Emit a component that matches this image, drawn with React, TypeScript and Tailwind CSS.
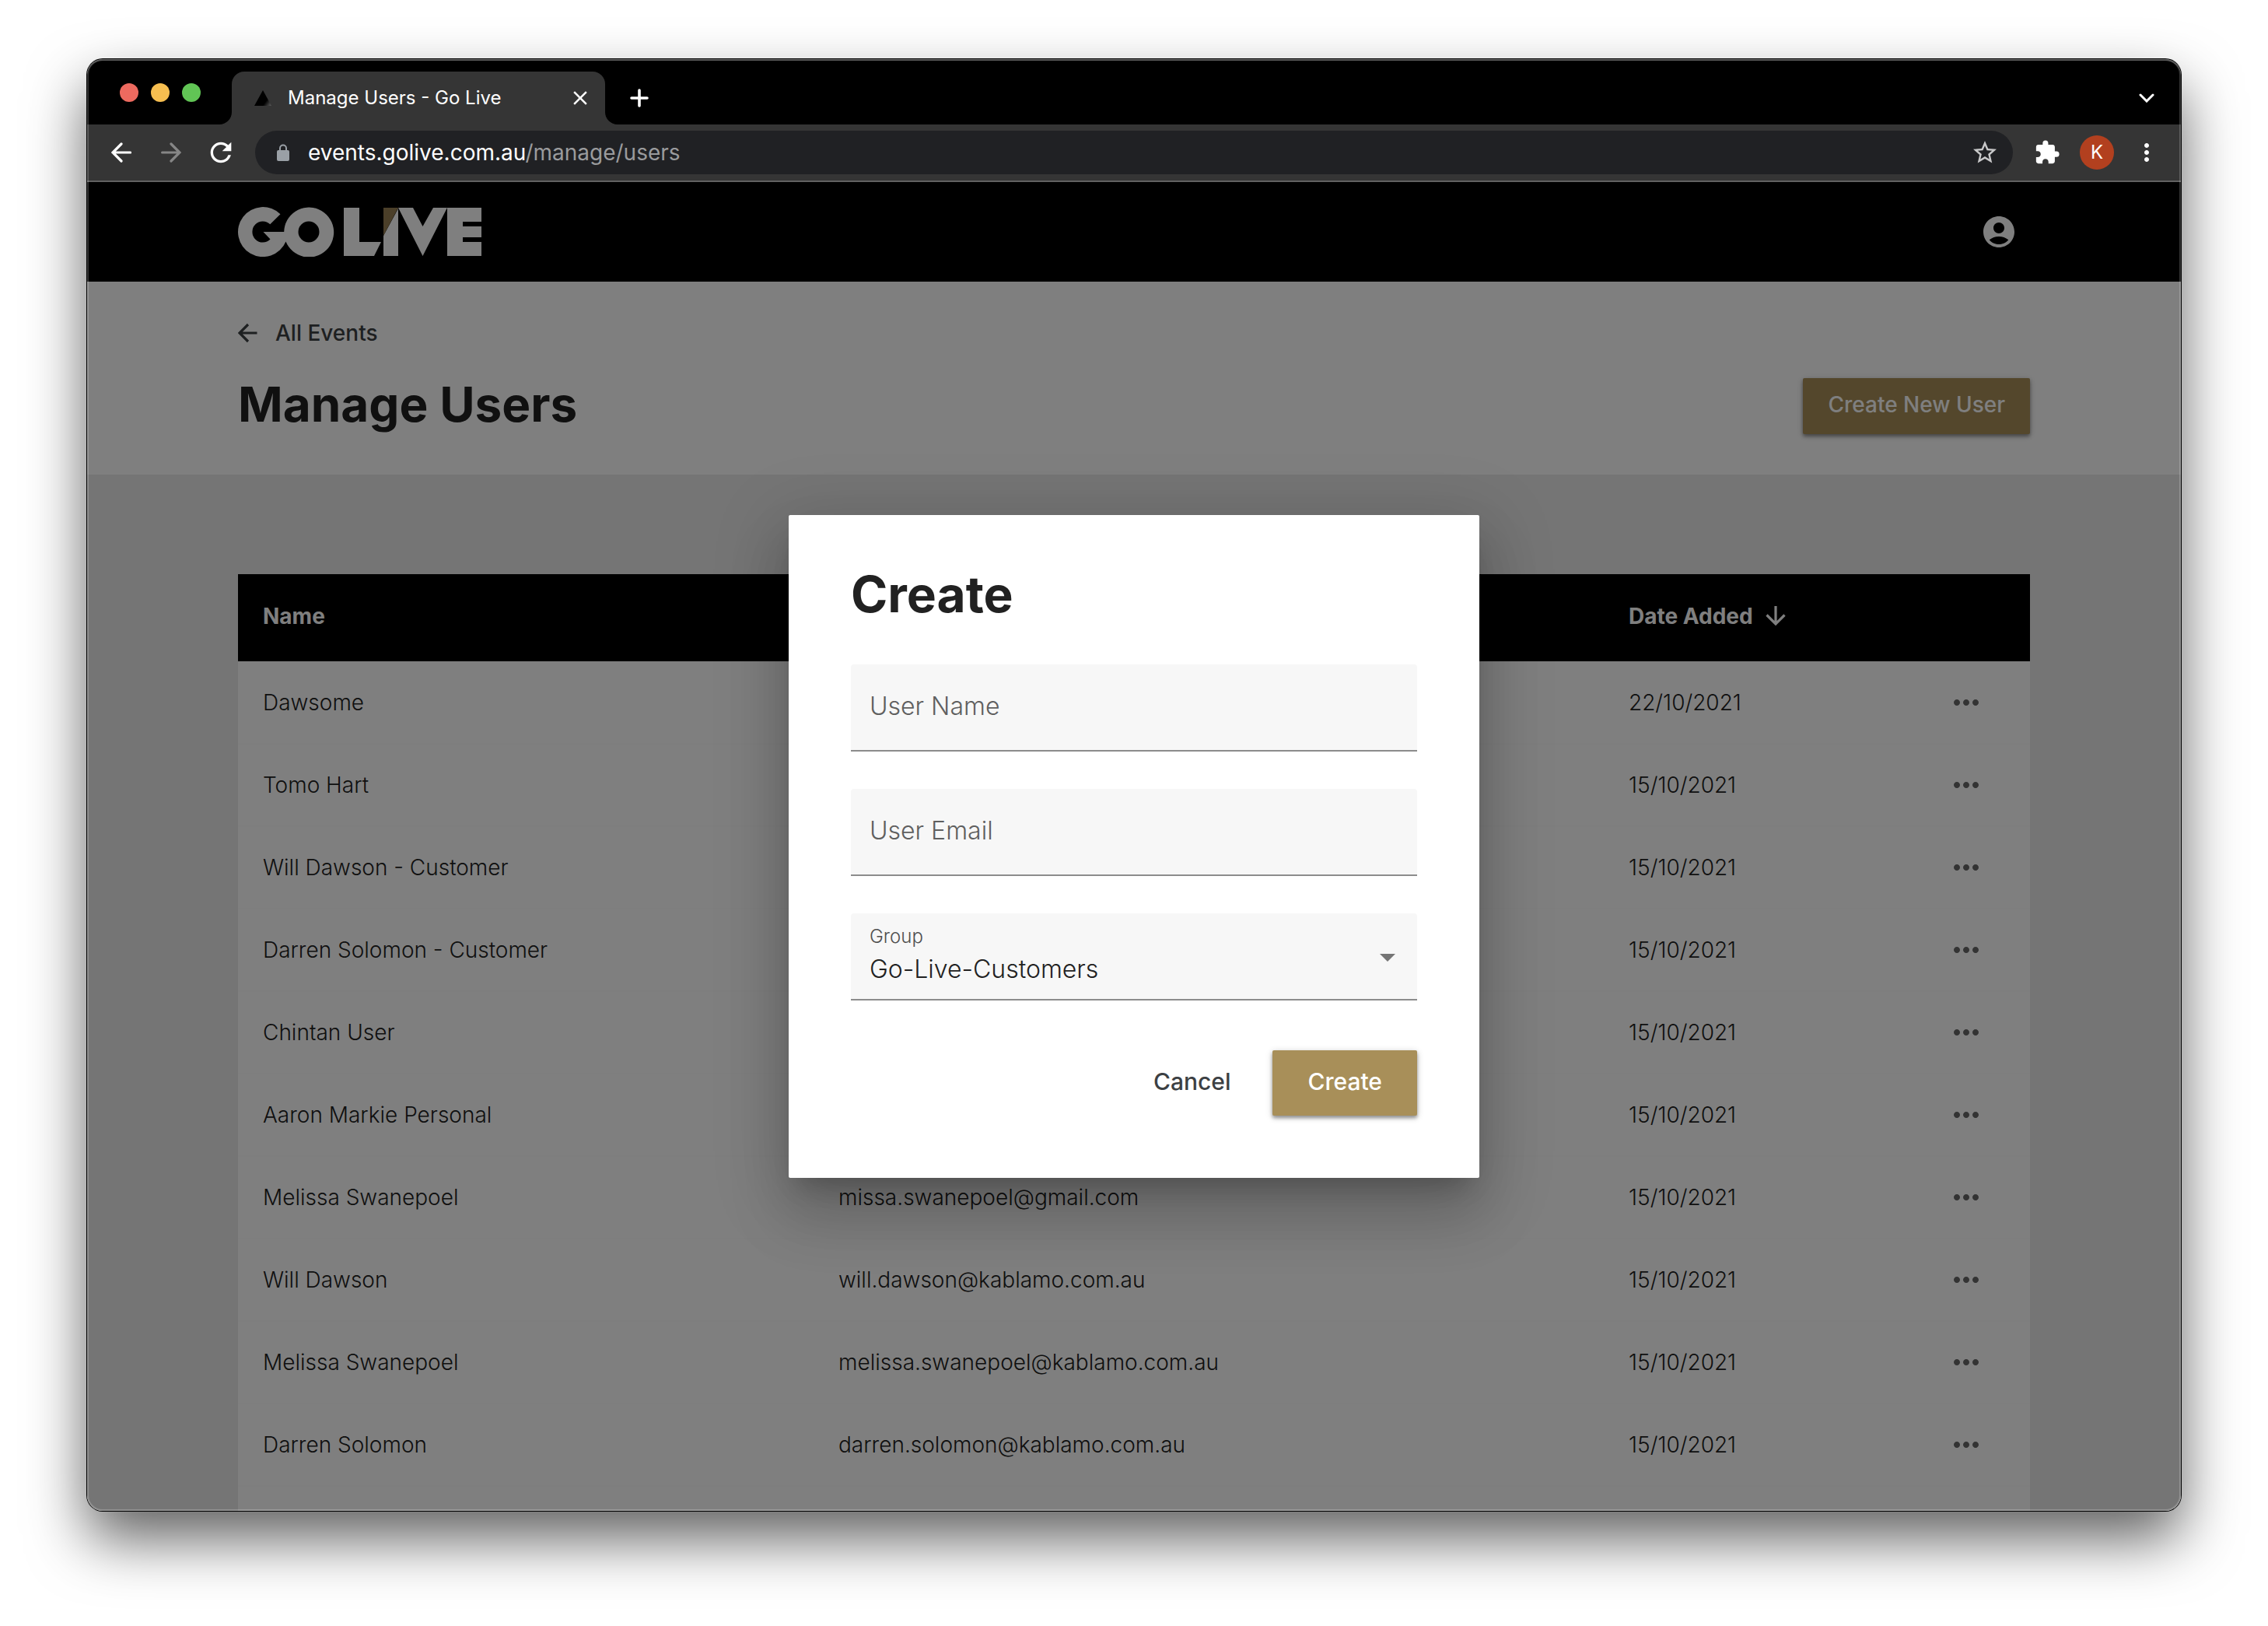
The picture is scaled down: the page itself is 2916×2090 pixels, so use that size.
import React from 'react';
import {
  MdAccountCircle,
  MdArrowDropDown,
  MdClose,
  MdExtension,
  MdMoreHoriz,
  MdMoreVert,
  MdRefresh,
  MdStarBorder,
} from 'react-icons/md';

const users = [
  { name: 'Dawsome', email: '', date: '22/10/2021' },
  { name: 'Tomo Hart', email: '', date: '15/10/2021' },
  { name: 'Will Dawson - Customer', email: '', date: '15/10/2021' },
  { name: 'Darren Solomon - Customer', email: '', date: '15/10/2021' },
  { name: 'Chintan User', email: '', date: '15/10/2021' },
  { name: 'Aaron Markie Personal', email: '', date: '15/10/2021' },
  { name: 'Melissa Swanepoel', email: 'missa.swanepoel@gmail.com', date: '15/10/2021' },
  { name: 'Will Dawson', email: 'will.dawson@kablamo.com.au', date: '15/10/2021' },
  { name: 'Melissa Swanepoel', email: 'melissa.swanepoel@kablamo.com.au', date: '15/10/2021' },
  { name: 'Darren Solomon', email: 'darren.solomon@kablamo.com.au', date: '15/10/2021' },
];

function Arrow({ className, d, cap = 'butt' }: { className: string; d: string; cap?: 'butt' | 'round' }) {
  return (
    <svg className={className} viewBox="0 0 26 26" fill="none" stroke="currentColor" strokeWidth="3.2" strokeLinecap={cap} aria-hidden="true">
      <path d={d} />
    </svg>
  );
}

const LEFT = 'M24.500 13H2M13 2L2 13l11 11';
const RIGHT = 'M1.600 13H24M13 2l11 11-11 11';
const DOWN = 'M13 0v23M1.500 11.500L13 23l11.500-11.500';

function TabStrip() {
  return (
    <div className="flex h-[84px] items-end bg-black pl-[42px] pr-[26px]">
      <div className="mb-[29px] flex gap-4">
        <button aria-label="Close window" className="size-6 rounded-full bg-[#ed6a5f]" />
        <button aria-label="Minimise window" className="size-6 rounded-full bg-[#f6be50]" />
        <button aria-label="Zoom window" className="size-6 rounded-full bg-[#61c555]" />
      </div>
      <svg className="ml-6 size-4 text-[#353535]" viewBox="0 0 16 16" fill="currentColor" aria-hidden="true">
        <path d="M16 0v16H0A16 16 0 0 0 16 0z" />
      </svg>
      <div className="flex h-[68px] w-[480px] items-center rounded-t-2xl bg-[#353535] pl-7 pr-4">
        <svg className="size-6" viewBox="0 0 24 24" aria-hidden="true">
          <defs>
            <linearGradient id="fade" x1="0.550" y1="0.600" x2="1" y2="0.900">
              <stop offset="0.300" stopColor="#000" />
              <stop offset="1" stopColor="#555" />
            </linearGradient>
          </defs>
          <path d="M12 2l11 20H1z" fill="url(#fade)" />
        </svg>
        <span className="ml-5 flex-1 text-2xl leading-8 text-white">Manage Users - Go Live</span>
        <button aria-label="Close tab" className="flex size-8 items-center justify-center text-white">
          <MdClose size={30} />
        </button>
      </div>
      <svg className="size-4 text-[#353535]" viewBox="0 0 16 16" fill="currentColor" aria-hidden="true">
        <path d="M0 0v16h16A16 16 0 0 1 0 0z" />
      </svg>
      <button aria-label="New tab" className="mb-4 ml-2.5 flex size-9 items-center justify-center text-white">
        <svg className="size-6" viewBox="0 0 24 24" fill="none" stroke="currentColor" strokeWidth="3.600" strokeLinecap="round" aria-hidden="true">
          <path d="M12 2v20M2 12h20" />
        </svg>
      </button>
      <button aria-label="Search tabs" className="mb-4 ml-auto flex size-9 items-center justify-center text-white">
        <svg className="h-3 w-5" viewBox="0 0 20 12" fill="none" stroke="currentColor" strokeWidth="3" strokeLinecap="round" aria-hidden="true">
          <path d="M2 2l8 8 8-8" />
        </svg>
      </button>
    </div>
  );
}

function Toolbar() {
  return (
    <div className="flex h-[74px] items-center border-b-2 border-[#616161] bg-[#353535] px-[26px]">
      <button aria-label="Back" className="flex h-10 w-9 items-center justify-center text-white">
        <Arrow className="size-[26px]" d={LEFT} cap="round" />
      </button>
      <button aria-label="Forward" className="ml-7 flex h-10 w-9 items-center justify-center text-[#868686]">
        <Arrow className="size-[26px]" d={RIGHT} cap="round" />
      </button>
      <button aria-label="Reload" className="ml-[26px] flex size-10 items-center justify-center text-white">
        <MdRefresh size={40} />
      </button>
      <div className="ml-6 flex h-14 flex-1 items-center rounded-full bg-[#202124] pl-7 pr-[18px]">
        <svg className="h-[22px] w-4" viewBox="0 0 16 22" aria-hidden="true">
          <rect y="8" width="16" height="14" rx="2" fill="#9aa0a6" />
          <path d="M4 9V5.500a4 4 0 0 1 8 0V9" fill="none" stroke="#9aa0a6" strokeWidth="2" />
        </svg>
        <a href="#users" className="ml-6 flex-1 text-[28px] leading-8 text-[#9a9b9d]">
          <span className="text-white">events.golive.com.au</span>/manage/users
        </a>
        <button aria-label="Bookmark" className="text-[#c8c8c9]">
          <MdStarBorder size={36} />
        </button>
      </div>
      <button aria-label="Extensions" className="ml-6 flex size-10 items-center justify-center text-white">
        <MdExtension size={34} />
      </button>
      <button aria-label="Profile" className="ml-[22px] size-11 rounded-full bg-[#b2401f] text-2xl text-white">
        K
      </button>
      <button aria-label="Menu" className="ml-6 flex size-9 items-center justify-center text-white">
        <MdMoreVert size={40} />
      </button>
    </div>
  );
}

function Logo() {
  return (
    <svg className="h-16 w-[314px]" viewBox="0 0 314 64" aria-label="Go Live" role="img">
      <g fill="#fff">
        <path
          fillRule="evenodd"
          d="M54.500 9.300A32 32 0 1 0 61.500 44.500 32 32 0 1 0 59.200 32H32.500l9 9.500A13.500 13.500 0 1 1 41.300 22.300zM91 18.500a13.500 13.500 0 1 1 0 27 13.500 13.500 0 0 1 0-27z"
        />
        <path d="M136 1h20v44h28l-9 18h-39z" />
        <path d="M206 2v61h-19V37z" />
        <path d="M206 1h19l12.500 24L251 1h18l-31.500 62z" />
        <path d="M269 1h44v18h-24v6h24v14h-24v6h24v18h-44z" />
      </g>
      <path d="M187 1h19l-19 36z" fill="#967f52" />
    </svg>
  );
}

function ManagePage() {
  return (
    <>
      <header className="bg-black">
        <div className="mx-auto flex h-32 max-w-[2304px] items-center justify-between pr-4">
          <Logo />
          <button aria-label="Account" className="text-white">
            <MdAccountCircle size={48} />
          </button>
        </div>
      </header>
      <section className="bg-white">
        <div className="mx-auto flex h-[248px] max-w-[2304px] items-end justify-between">
          <div className="pb-[50px]">
            <a href="#events" className="flex items-center gap-[22px] text-[28px] font-medium leading-9 text-[#3c4043]">
              <Arrow className="size-[26px]" d={LEFT} />
              All Events
            </a>
            <h1 className="mt-[34px] text-[62px] font-bold leading-[80px] text-[#212121]">Manage Users</h1>
          </div>
          <button className="mb-[52px] h-[72px] rounded-xs bg-[#a88f59] px-8 pb-1 text-[28px] font-medium text-white shadow-[0_3px_4px_rgba(0,0,0,0.35),0_2px_10px_rgba(0,0,0,0.2)]">
            Create New User
          </button>
        </div>
      </section>
      <main className="flex-1 bg-[#ebebeb] pt-32">
        <div className="mx-auto flex h-full max-w-[2304px] flex-col bg-white">
          <table className="w-full table-fixed border-collapse text-left text-[28px] text-[#212121]">
            <colgroup>
              <col className="w-[740px]" />
              <col className="w-[1016px]" />
              <col />
              <col className="w-[164px]" />
            </colgroup>
            <thead>
              <tr className="h-28 bg-black text-white">
                <th className="px-8 pb-1 font-bold">Name</th>
                <th aria-label="Email" />
                <th className="px-8 pb-1 font-bold">
                  <span className="flex items-center gap-4">
                    Date Added
                    <Arrow className="size-[26px]" d={DOWN} />
                  </span>
                </th>
                <th aria-label="Actions" />
              </tr>
            </thead>
            <tbody className="font-light">
              {users.map((user, i) => (
                <tr key={i} className="h-[106px] border-b-2 border-[#fdfdfd]">
                  <td className="px-8">{user.name}</td>
                  <td className="px-8">{user.email}</td>
                  <td className="px-8">{user.date}</td>
                  <td className="pl-[58px]">
                    <button aria-label={'Options for ' + user.name} className="block text-[#666]">
                      <MdMoreHoriz size={48} />
                    </button>
                  </td>
                </tr>
              ))}
            </tbody>
          </table>
        </div>
      </main>
    </>
  );
}

function TextField({ id, label, type }: { id: string; label: string; type: string }) {
  return (
    <input
      id={id}
      type={type}
      aria-label={label}
      placeholder={label}
      className="block h-28 w-full rounded-t-sm border-b-2 border-[#8c8c8c] bg-[#f7f7f7] px-6 pb-1 text-[32px] font-light text-[#212121] outline-none placeholder:text-[#5f5f5f]"
    />
  );
}

function CreateDialog() {
  return (
    <form
      role="dialog"
      aria-labelledby="dialog-title"
      onSubmit={(e) => e.preventDefault()}
      className="w-[888px] rounded-xs bg-white px-20 pb-20 pt-[62px] shadow-[0_22px_30px_-14px_rgba(0,0,0,0.2),0_48px_76px_6px_rgba(0,0,0,0.14),0_18px_92px_16px_rgba(0,0,0,0.12)]"
    >
      <h2 id="dialog-title" className="text-[64px] font-bold leading-[80px] text-[#212121]">
        Create
      </h2>
      <div className="mt-[50px] flex flex-col gap-12">
        <TextField id="user-name" label="User Name" type="text" />
        <TextField id="user-email" label="User Email" type="email" />
        <div className="relative flex h-28 flex-col rounded-t-sm border-b-2 border-[#8c8c8c] bg-[#f7f7f7] pt-4">
          <label htmlFor="group" className="px-6 text-2xl leading-7 font-light text-[#4f4f4f]">
            Group
          </label>
          <select
            id="group"
            className="h-14 w-full appearance-none bg-transparent px-6 text-[32px] font-light text-[#212121] outline-none"
          >
            <option>Go-Live-Customers</option>
          </select>
          <MdArrowDropDown className="pointer-events-none absolute right-[14px] top-8 text-[#757575]" size={48} />
        </div>
      </div>
      <div className="mt-16 flex justify-end">
        <button type="button" className="h-[84px] px-[54px] pb-1 text-[30px] font-medium text-[#3c4043]">
          Cancel
        </button>
        <button
          type="submit"
          className="h-[84px] rounded-xs bg-[#a88f59] px-[45px] pb-1 text-[30px] font-medium text-white shadow-[0_3px_4px_rgba(0,0,0,0.35),0_2px_10px_rgba(0,0,0,0.2)]"
        >
          Create
        </button>
      </div>
    </form>
  );
}

export default function App() {
  return (
    <div className="flex h-screen bg-white px-28 pt-[76px] pb-[148px] font-[Inter,sans-serif]">
      <div className="relative flex flex-1 flex-col overflow-hidden rounded-[20px] shadow-[0_0_0_1px_#000,0_36px_76px_rgba(0,0,0,0.62)]">
        <TabStrip />
        <Toolbar />
        <div className="relative flex min-h-0 flex-1 flex-col overflow-hidden">
          <ManagePage />
          <div className="absolute inset-0 flex items-center justify-center bg-black/50">
            <CreateDialog />
          </div>
        </div>
        <div className="pointer-events-none absolute inset-0 rounded-[20px] shadow-[inset_0_0_0_2px_rgba(255,255,255,0.2),inset_0_2px_0_rgba(255,255,255,0.2)]" />
      </div>
    </div>
  );
}
